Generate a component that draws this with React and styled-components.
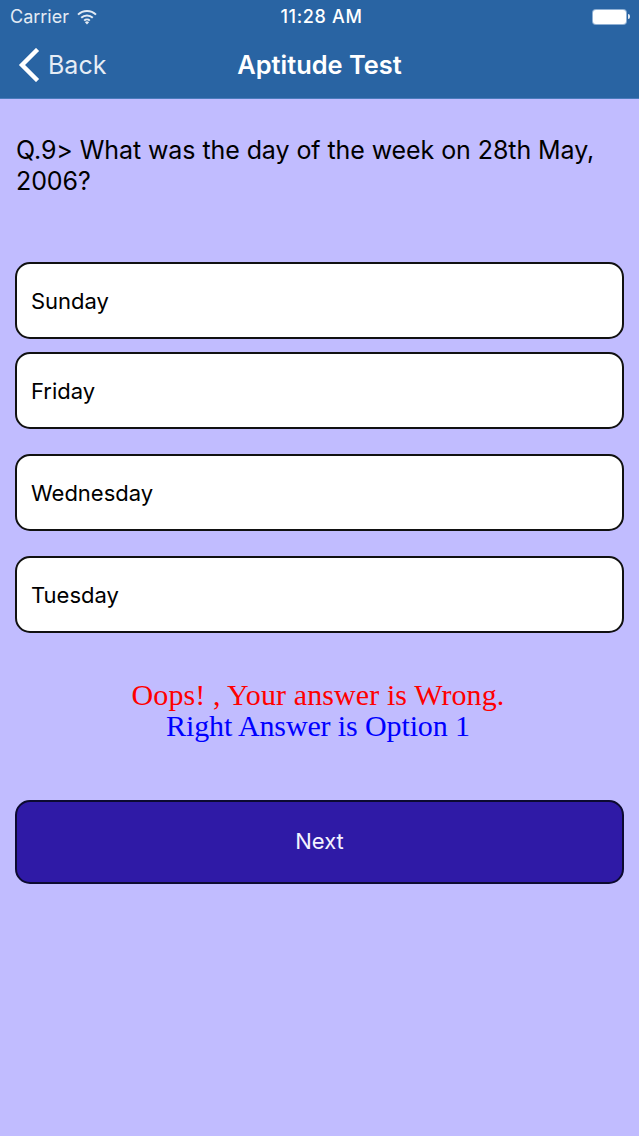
import React from "react"
import styled, { createGlobalStyle } from "styled-components"

const GlobalStyle = createGlobalStyle`
  html, body {
    margin: 0;
    padding: 0;
    background: #c1bcff;
  }
  * { box-sizing: border-box; }
`

const Page = styled.div`
  width: 639px;
  height: 1136px;
  overflow: hidden;
  background: #c1bcff;
  font-family: Inter, "Liberation Sans", sans-serif;
  color: #000;
`

const Header = styled.header`
  height: 99px;
  background: #2964a3;
  border-bottom: 1px solid #4a7cbc;
  color: #fff;
`

const StatusBar = styled.div`
  height: 33px;
  padding: 0 9px 0 10px;
  display: grid;
  grid-template-columns: 1fr auto 1fr;
  align-items: center;
  font-size: 18px;
`

const StatusLeft = styled.div`
  display: flex;
  align-items: center;
  gap: 8px;
  color: #e3ebf4;
`

const Time = styled.div`
  margin-left: 3px;
  font-weight: 500;
  font-size: 18px;
  letter-spacing: 0.65px;
`

const Battery = styled.div`
  justify-self: end;
  display: flex;
  align-items: center;
  gap: 1px;
  &::before {
    content: "";
    width: 33px;
    height: 14px;
    border-radius: 3px;
    background: #fff;
    box-shadow: 0 0 0 1px #8fb0d4;
  }
  &::after {
    content: "";
    width: 2px;
    height: 5px;
    margin-left: 1px;
    border-radius: 0 2px 2px 0;
    background: #dfe8f2;
  }
`

const NavBar = styled.div`
  height: 65px;
  position: relative;
  display: flex;
  align-items: center;
  justify-content: center;
`

const BackLink = styled.div`
  position: absolute;
  left: 18px;
  top: 15px;
  display: flex;
  align-items: center;
  gap: 8px;
  font-size: 25px;
  color: #e6edf5;
`

const Title = styled.div`
  font-size: 25.4px;
  font-weight: 600;
  margin-bottom: 3px;
`

const Content = styled.main`
  padding: 36px 15px 0;
`

const Question = styled.p`
  margin: 0 0 66px 1px;
  font-size: 25px;
  letter-spacing: -0.08px;
  line-height: 31px;
  height: 61px;
`

const Options = styled.div`
  display: flex;
  flex-direction: column;
`

const Option = styled.div`
  height: 77px;
  margin-top: ${(p) => p.$gap}px;
  padding-left: 14px;
  display: flex;
  align-items: center;
  background: #fff;
  border: 2px solid #111;
  border-radius: 15px;
  font-size: 22px;
`

const Result = styled.div`
  margin-top: 46px;
  padding-right: 3px;
  text-align: center;
  font-family: "Liberation Serif", serif;
  font-size: 30px;
  line-height: 31px;
`

const ResultLine = styled.div`
  color: ${(p) => p.$color};
  letter-spacing: ${(p) => p.$spacing}px;
`

const NextButton = styled.button`
  display: block;
  width: 100%;
  height: 84px;
  margin-top: 59px;
  padding-bottom: 3px;
  background: #2f1aa6;
  border: 2px solid #0c0a30;
  border-radius: 15px;
  color: #f4f2ff;
  font-family: inherit;
  font-size: 22px;
`

const WifiIcon = () => (
  <svg width="20" height="16" viewBox="0 0 20 16" fill="none" stroke="#e3ebf4" strokeWidth="2">
    <path d="M1 5.6a12.8 12.8 0 0 1 18 0" />
    <path d="M4.2 8.8a8.3 8.3 0 0 1 11.6 0" />
    <path d="M7.2 11.6a4 4 0 0 1 5.6 0" />
    <path d="M10 15.4 7.9 13.2a3 3 0 0 1 4.2 0z" fill="#e3ebf4" stroke="none" />
  </svg>
)

const BackIcon = () => (
  <svg width="22" height="34" viewBox="0 0 22 34" fill="none" stroke="#fff" strokeWidth="4.4" strokeLinecap="square">
    <path d="M18 3 4 17l14 14" />
  </svg>
)

const options = [
  { label: "Sunday", gap: 0 },
  { label: "Friday", gap: 13 },
  { label: "Wednesday", gap: 25 },
  { label: "Tuesday", gap: 25 },
]

const App = () => {
  return (
    <Page>
      <GlobalStyle />
      <Header>
        <StatusBar>
          <StatusLeft>
            Carrier
            <WifiIcon />
          </StatusLeft>
          <Time>11:28 AM</Time>
          <Battery />
        </StatusBar>
        <NavBar>
          <BackLink>
            <BackIcon />
            Back
          </BackLink>
          <Title>Aptitude Test</Title>
        </NavBar>
      </Header>
      <Content>
        <Question>Q.9&gt; What was the day of the week on 28th May, 2006?</Question>
        <Options>
          {options.map((o) => (
            <Option key={o.label} $gap={o.gap}>{o.label}</Option>
          ))}
        </Options>
        <Result>
          <ResultLine $color="#ff0000" $spacing={0.1}>Oops! , Your answer is Wrong.</ResultLine>
          <ResultLine $color="#0000ff" $spacing={-0.12}>Right Answer is Option 1</ResultLine>
        </Result>
        <NextButton>Next</NextButton>
      </Content>
    </Page>
  )
}

export default App
